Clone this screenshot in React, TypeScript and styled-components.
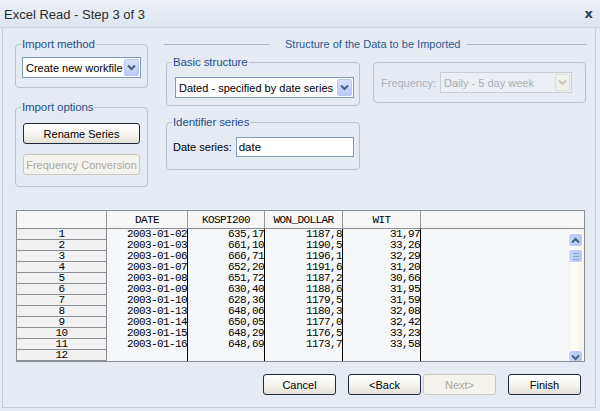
import React from "react";
import styled, { createGlobalStyle } from "styled-components";

const GlobalStyle = createGlobalStyle`
  html, body {
    margin: 0;
    padding: 0;
    background: #e6ebf3;
  }
  body {
    font-family: "Liberation Sans", Arial, sans-serif;
    font-size: 11px;
    color: #000;
  }
`;

const Window = styled.div`
  width: 600px;
  height: 411px;
  box-sizing: border-box;
  background: #e6ebf3;
  display: flex;
  flex-direction: column;
  overflow: hidden;
`;

const TitleBar = styled.div`
  height: 28px;
  flex: none;
  display: flex;
  align-items: center;
  justify-content: space-between;
  padding: 0 7px 0 4px;
  box-sizing: border-box;
  background: linear-gradient(#eef2f8, #dde4ef);
  border-bottom: 1px solid #cbd3df;
`;

const Title = styled.span`
  font-size: 13px;
  color: #2b2b2b;
  padding-top: 2px;
`;

const Close = styled.span`
  font-family: "DejaVu Sans", sans-serif;
  font-size: 13px;
  font-weight: bold;
  color: #2c3d5c;
`;

const Body = styled.div`
  flex: 1;
  margin: 0 4px 3px 2px;
  border: 1px solid #c6cedb;
  border-top: none;
  display: flex;
  flex-direction: column;
`;

const TopArea = styled.div`
  display: flex;
  padding: 16px 0 0 12px;
  gap: 16px;
  align-items: flex-start;
`;

const Column = styled.div<{ $width: number }>`
  width: ${(p) => p.$width}px;
  display: flex;
  flex-direction: column;
`;

const Group = styled.div<{ $width?: number; $height: number; $top?: number; $left?: number }>`
  position: relative;
  box-sizing: border-box;
  width: ${(p) => (p.$width ? `${p.$width}px` : "auto")};
  height: ${(p) => p.$height}px;
  margin-top: ${(p) => p.$top ?? 0}px;
  margin-left: ${(p) => p.$left ?? 0}px;
  border: 1px solid #b7c1cf;
  border-radius: 4px;
  display: flex;
  flex-direction: column;
  align-items: flex-start;
`;

const Legend = styled.span`
  position: absolute;
  top: -8px;
  left: 5px;
  padding: 0 1px;
  background: #e6ebf3;
  color: #1f4f8f;
  font-size: 11.5px;
  line-height: 14px;
  letter-spacing: -0.1px;
`;

const Select = styled.div<{ $width: number; $disabled?: boolean }>`
  width: ${(p) => p.$width}px;
  height: 21px;
  box-sizing: border-box;
  border: 1px solid ${(p) => (p.$disabled ? "#c9cfd8" : "#7f9db9")};
  background: ${(p) => (p.$disabled ? "#ebeef3" : "#fff")};
  color: ${(p) => (p.$disabled ? "#a9b0ba" : "#000")};
  display: flex;
  align-items: center;
  justify-content: space-between;
  padding: 0 1px 0 3px;
  font-size: 11px;
  white-space: nowrap;
`;

const DropButton = styled.span<{ $disabled?: boolean }>`
  width: 15px;
  height: 17px;
  border-radius: 2px;
  display: flex;
  align-items: center;
  justify-content: center;
  background: ${(p) =>
    p.$disabled ? "#f0f0ea" : "linear-gradient(#d6e2fb, #b7cbf4)"};
  border: 1px solid ${(p) => (p.$disabled ? "#dcdcd4" : "#b6c8ef")};
  box-sizing: border-box;
`;

const Chevron = ({ color, up }: { color: string; up?: boolean }) => (
  <svg width="9" height="7" viewBox="0 0 9 7">
    <path
      d={up ? "M1 5.5 L4.5 2 L8 5.5" : "M1 1.5 L4.5 5 L8 1.5"}
      fill="none"
      stroke={color}
      strokeWidth="2"
    />
  </svg>
);

const Button = styled.button<{ $width: number; $disabled?: boolean; $gap?: number }>`
  width: ${(p) => p.$width}px;
  height: 21px;
  margin-left: ${(p) => p.$gap ?? 0}px;
  box-sizing: border-box;
  padding: 0;
  border-radius: 3px;
  border: 1px solid ${(p) => (p.$disabled ? "#cbc9bd" : "#1e2b3c")};
  background: ${(p) =>
    p.$disabled ? "#f4f3ee" : "linear-gradient(#ffffff, #f3f2ec 60%, #e2e0d6)"};
  color: ${(p) => (p.$disabled ? "#aca899" : "#000")};
  font-family: "Liberation Sans", Arial, sans-serif;
  font-size: 11px;
  white-space: nowrap;
`;

const StructureHead = styled.div`
  display: flex;
  align-items: center;
  gap: 7px;
  height: 14px;
  margin-top: -7px;
  color: #2a5a90;
  font-size: 11px;
  white-space: nowrap;

  &::before,
  &::after {
    content: "";
    flex: 1;
    height: 1px;
    background: #aeb8c6;
  }
  &::before {
    flex: 0 0 106px;
    margin-right: 8px;
  }
`;

const GroupRow = styled.div`
  display: flex;
  align-items: flex-start;
  gap: 13px;
`;

const FieldLine = styled.div<{ $top: number; $left: number }>`
  display: flex;
  align-items: center;
  gap: 4px;
  margin: ${(p) => p.$top}px 0 0 ${(p) => p.$left}px;
`;

const Label = styled.span<{ $disabled?: boolean }>`
  color: ${(p) => (p.$disabled ? "#a9b0ba" : "#000")};
  font-size: 11px;
  white-space: nowrap;
`;

const TextInput = styled.div`
  width: 118px;
  height: 20px;
  box-sizing: border-box;
  border: 1px solid #7f9db9;
  background: #fff;
  padding: 1px 2px;
  font-size: 11.5px;
  line-height: 16px;
`;

const ColWidths = [81, 77, 78, 78];

const Table = styled.div`
  margin: 23px 0 0 13px;
  width: 569px;
  height: 152px;
  box-sizing: border-box;
  border: 1px solid #8a8f96;
  background: #f6f7f9;
  display: flex;
  flex-direction: column;
  overflow: hidden;
  font-family: "Liberation Mono", "DejaVu Sans Mono", monospace;
  font-size: 11px;
  letter-spacing: -0.6px;
`;

const HeaderRow = styled.div`
  display: flex;
  height: 17px;
  flex: none;
  border-bottom: 1px solid #8a8f96;
  background: #f7f7f7;
`;

const HeadCell = styled.div<{ $width: number }>`
  width: ${(p) => p.$width}px;
  flex: none;
  box-sizing: border-box;
  border-right: 1px solid #999;
  display: flex;
  align-items: center;
  justify-content: center;
  line-height: 16px;
`;

const HeadFill = styled.div`
  flex: 1;
`;

const GridBody = styled.div`
  display: flex;
  flex: 1;
  min-height: 0;
`;

const RowHeads = styled.div`
  width: 90px;
  flex: none;
  box-sizing: border-box;
  border-right: 1px solid #8a8f96;
  display: flex;
  flex-direction: column;
  overflow: hidden;
`;

const RowHead = styled.div`
  height: 11px;
  flex: none;
  box-sizing: border-box;
  border-bottom: 1px solid #8a8f96;
  background: #f1f1f1;
  text-align: center;
  line-height: 11px;
`;

const DataCol = styled.div<{ $width: number }>`
  width: ${(p) => p.$width}px;
  flex: none;
  box-sizing: border-box;
  border-right: 1px solid #000;
  overflow: hidden;
  display: flex;
  flex-direction: column;
  align-items: flex-end;
`;

const DataCell = styled.div`
  height: 11px;
  line-height: 11px;
  white-space: nowrap;
`;

const Fill = styled.div`
  flex: 1;
  display: flex;
  justify-content: flex-end;
  padding: 2px 1px 0 0;
`;

const ScrollBar = styled.div`
  width: 15px;
  height: 131px;
  display: flex;
  flex-direction: column;
  background: linear-gradient(90deg, #f5f3ee, #fdfcf8 40%, #f3f1ea);
  border-radius: 2px;
`;

const ScrollButton = styled.div<{ $top?: number }>`
  width: 15px;
  height: 14px;
  margin-top: ${(p) => p.$top ?? 0}px;
  box-sizing: border-box;
  border: 1px solid #fff;
  border-radius: 3px;
  background: linear-gradient(90deg, #c4d4f6, #b5c8f1);
  display: flex;
  align-items: center;
  justify-content: center;
  flex: none;
`;

const Grip = styled.div`
  width: 6px;
  height: 5px;
  border-top: 1px solid #8da2cc;
  border-bottom: 1px solid #8da2cc;
  position: relative;

  &::after {
    content: "";
    position: absolute;
    left: 0;
    right: 0;
    top: 2px;
    height: 1px;
    background: #8da2cc;
  }
`;

const ButtonRow = styled.div`
  display: flex;
  justify-content: flex-end;
  align-items: center;
  margin-top: 12px;
  padding-right: 14px;
`;

const dates = [
  "2003-01-02",
  "2003-01-03",
  "2003-01-06",
  "2003-01-07",
  "2003-01-08",
  "2003-01-09",
  "2003-01-10",
  "2003-01-13",
  "2003-01-14",
  "2003-01-15",
  "2003-01-16",
];
const kospi = ["635,17", "661,10", "666,71", "652,20", "651,72", "630,40", "628,36", "648,06", "650,05", "648,29", "648,69"];
const won = ["1187,8", "1190,5", "1196,1", "1191,6", "1187,2", "1188,6", "1179,5", "1180,3", "1177,0", "1176,5", "1173,7"];
const wit = ["31,97", "33,26", "32,29", "31,20", "30,66", "31,95", "31,59", "32,08", "32,42", "33,23", "33,58"];

const columns = [dates, kospi, won, wit];
const headers = ["DATE", "KOSPI200", "WON_DOLLAR", "WIT"];

export default function App() {
  return (
    <>
      <GlobalStyle />
      <Window>
        <TitleBar>
          <Title>Excel Read - Step 3 of 3</Title>
          <Close>x</Close>
        </TitleBar>
        <Body>
          <TopArea>
            <Column $width={133}>
              <Group $height={44}>
                <Legend>Import method</Legend>
                <FieldLine $top={12} $left={6}>
                  <Select $width={119}>
                    Create new workfile
                    <DropButton>
                      <Chevron color="#4a5f86" />
                    </DropButton>
                  </Select>
                </FieldLine>
              </Group>
              <Group $height={80} $top={19}>
                <Legend>Import options</Legend>
                <FieldLine $top={15} $left={7}>
                  <Button $width={117}>Rename Series</Button>
                </FieldLine>
                <FieldLine $top={10} $left={7}>
                  <Button $width={117} $disabled>
                    Frequency Conversion
                  </Button>
                </FieldLine>
              </Group>
            </Column>
            <Column $width={423}>
              <StructureHead>Structure of the Data to be Imported</StructureHead>
              <GroupRow>
                <Group $width={194} $height={44} $top={11} $left={2}>
                  <Legend>Basic structure</Legend>
                  <FieldLine $top={14} $left={8}>
                    <Select $width={179}>
                      Dated - specified by date series
                      <DropButton>
                        <Chevron color="#4a5f86" />
                      </DropButton>
                    </Select>
                  </FieldLine>
                </Group>
                <Group $width={213} $height={41} $top={11}>
                  <FieldLine $top={9} $left={7}>
                    <Label $disabled>Frequency:</Label>
                    <Select $width={132} $disabled>
                      Daily - 5 day week
                      <DropButton $disabled>
                        <Chevron color="#c8c8c0" />
                      </DropButton>
                    </Select>
                  </FieldLine>
                </Group>
              </GroupRow>
              <Group $width={194} $height={48} $top={16} $left={2}>
                <Legend>Identifier series</Legend>
                <FieldLine $top={14} $left={6}>
                  <Label>Date series:</Label>
                  <TextInput>date</TextInput>
                </FieldLine>
              </Group>
            </Column>
          </TopArea>

          <Table>
            <HeaderRow>
              <HeadCell $width={90} />
              {headers.map((h, i) => (
                <HeadCell key={h} $width={ColWidths[i]}>
                  {h}
                </HeadCell>
              ))}
              <HeadFill />
            </HeaderRow>
            <GridBody>
              <RowHeads>
                {Array.from({ length: 13 }, (_, i) => (
                  <RowHead key={i}>{i + 1}</RowHead>
                ))}
              </RowHeads>
              {columns.map((col, i) => (
                <DataCol key={headers[i]} $width={ColWidths[i]}>
                  {col.map((v, j) => (
                    <DataCell key={j}>{v}</DataCell>
                  ))}
                </DataCol>
              ))}
              <Fill>
                <ScrollBar>
                  <ScrollButton $top={2}>
                    <Chevron color="#4a5f86" up />
                  </ScrollButton>
                  <ScrollButton $top={2}>
                    <Grip />
                  </ScrollButton>
                  <ScrollButton $top={87}>
                    <Chevron color="#4a5f86" />
                  </ScrollButton>
                </ScrollBar>
              </Fill>
            </GridBody>
          </Table>

          <ButtonRow>
            <Button $width={73}>Cancel</Button>
            <Button $width={73} $gap={12}>
              &lt;Back
            </Button>
            <Button $width={73} $disabled $gap={2}>
              Next&gt;
            </Button>
            <Button $width={73} $gap={12}>
              Finish
            </Button>
          </ButtonRow>
        </Body>
      </Window>
    </>
  );
}
